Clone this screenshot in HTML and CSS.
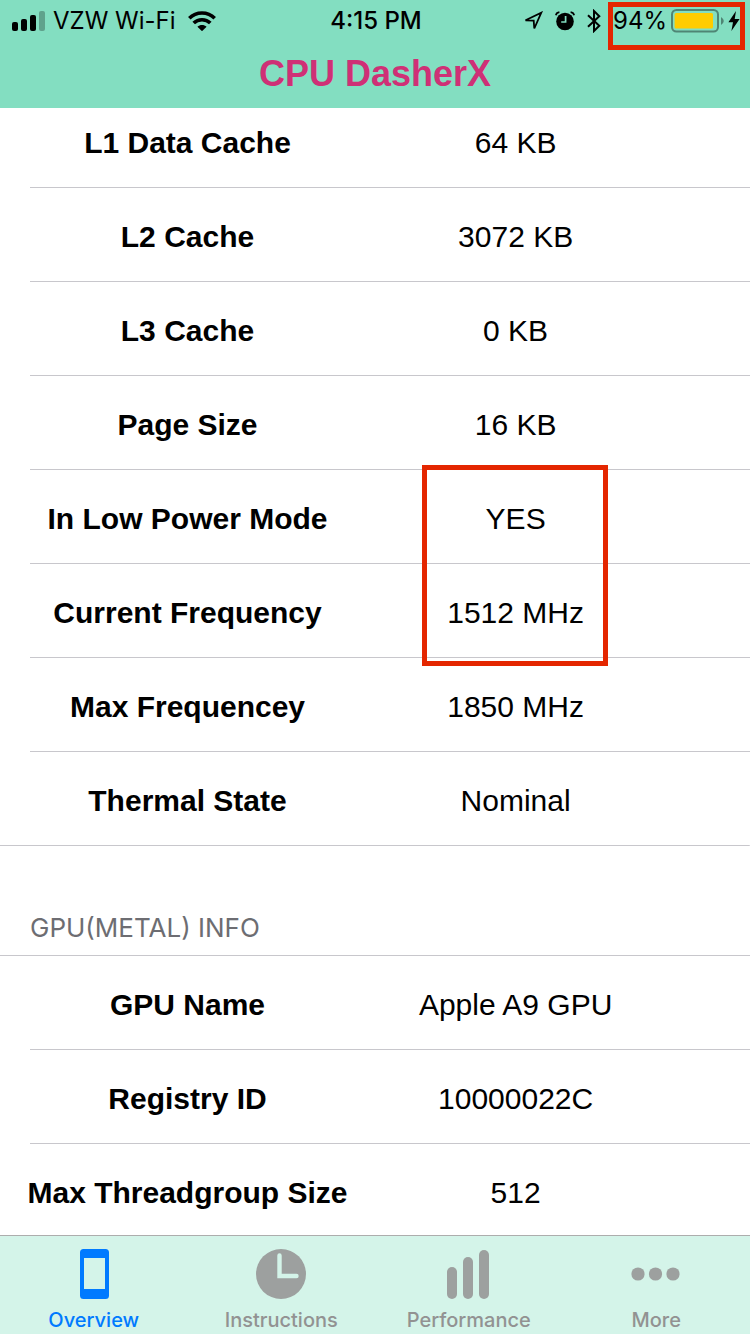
FILE: index.html
```html
<!DOCTYPE html>
<html lang="en">
<head>
<meta charset="utf-8">
<meta name="viewport" content="width=device-width, initial-scale=1">
<title>CPU DasherX</title>
<link rel="stylesheet" href="styles.css">
</head>
<body class="app">
<header class="header">
  <div class="status">
    <div class="status-left">
      <svg class="signal" width="34" height="20" viewBox="0 0 34 20" aria-hidden="true">
        <rect x="0" y="11" width="6" height="9" rx="2"/>
        <rect x="9" y="8" width="6" height="12" rx="2"/>
        <rect x="18" y="4" width="6" height="16" rx="2"/>
        <rect x="27" y="0" width="6" height="20" rx="2" opacity=".27"/>
      </svg>
      <span class="carrier">VZW Wi-Fi</span>
      <svg width="28" height="20" viewBox="0 0 28 20" aria-hidden="true">
        <g fill="none" stroke="#000" stroke-width="3.6">
          <path d="M1.3 7.2C8.3 .2 19.7 .2 26.7 7.2"/>
          <path d="M5.7 12.1C10.2 7.6 17.8 7.6 22.3 12.1"/>
        </g>
        <path d="M9.4 15.8C12 13.4 16 13.4 18.6 15.8L14 20.2Z"/>
      </svg>
    </div>
    <time class="clock">4:15 PM</time>
    <div class="status-right">
      <svg width="20" height="20" viewBox="0 0 20 20" aria-hidden="true">
        <path d="M2.500 9.300L18.300 1.700L11.300 17.500L10.700 9.600Z" fill="none" stroke="#000" stroke-width="1.800"/>
      </svg>
      <svg width="20" height="20" viewBox="0 0 20 20" aria-hidden="true">
        <circle cx="10" cy="10.500" r="8.800"/>
        <path d="M.8 4.200Q1.600 1.600 4.400 1.200M19.200 4.200Q18.400 1.600 15.600 1.200" fill="none" stroke="#000" stroke-width="1.700"/>
        <path d="M10.600 5V11H6.200" fill="none" stroke="#83dec1" stroke-width="1.700"/>
      </svg>
      <svg width="14" height="24" viewBox="0 0 14 24" aria-hidden="true">
        <path d="M1 6.300L12.300 16.800L7 22V2L12.300 7.200L1 17.700" fill="none" stroke="#000" stroke-width="2"/>
      </svg>
      <div class="power">
        <span>94%</span>
        <svg width="53" height="24" viewBox="0 0 53 24" aria-hidden="true">
          <rect x="1" y="1" width="46" height="21.5" rx="4.5" fill="none" stroke="#4f8574" stroke-width="2"/>
          <rect x="3.6" y="4" width="38.4" height="15.4" rx="1.5" fill="#fc0"/>
          <path d="M50 8Q55.6 12 50 16Z" fill="#4f8574"/>
        </svg>
        <svg width="12" height="22" viewBox="0 0 12 22" aria-hidden="true">
          <path d="M8 1L.4 12.2H5L3.4 21L11.6 9H6.7Z"/>
        </svg>
      </div>
    </div>
  </div>
  <h1 class="title">CPU DasherX</h1>
</header>

<main class="content">
  <table class="specs specs-scrolled" aria-label="CPU info">
    <colgroup><col class="col-name"><col class="col-value"><col></colgroup>
    <tbody>
      <tr><th scope="row">L1 Data Cache</th><td>64 KB</td><td></td></tr>
      <tr><th scope="row">L2 Cache</th><td>3072 KB</td><td></td></tr>
      <tr><th scope="row">L3 Cache</th><td>0 KB</td><td></td></tr>
      <tr><th scope="row">Page Size</th><td>16 KB</td><td></td></tr>
      <tr><th scope="row">In Low Power Mode</th><td class="marked">YES</td><td></td></tr>
      <tr><th scope="row">Current Frequency</th><td>1512 MHz</td><td></td></tr>
      <tr><th scope="row">Max Frequencey</th><td>1850 MHz</td><td></td></tr>
      <tr><th scope="row">Thermal State</th><td>Nominal</td><td></td></tr>
    </tbody>
  </table>
  <h2 class="section" id="gpu">GPU(METAL) INFO</h2>
  <table class="specs" aria-labelledby="gpu">
    <colgroup><col class="col-name"><col class="col-value"><col></colgroup>
    <tbody>
      <tr><th scope="row">GPU Name</th><td>Apple A9 GPU</td><td></td></tr>
      <tr><th scope="row">Registry ID</th><td>10000022C</td><td></td></tr>
      <tr><th scope="row">Max Threadgroup Size</th><td>512</td><td></td></tr>
    </tbody>
  </table>
</main>

<nav class="tabs">
  <button class="tab tab-active" type="button" aria-current="page">
    <svg width="50" height="50" viewBox="0 0 50 50" aria-hidden="true">
      <path fill-rule="evenodd" d="M14.500 0H36.500Q40 0 40 3.500V46.500Q40 50 36.500 50H14.500Q11 50 11 46.500V3.500Q11 0 14.500 0ZM15 9V40H36V9Z"/>
    </svg>
    <span>Overview</span>
  </button>
  <button class="tab" type="button">
    <svg width="50" height="50" viewBox="0 0 50 50" aria-hidden="true">
      <circle cx="25" cy="25" r="25"/>
      <path d="M23.500 6.500V27H40.500" fill="none" stroke="#d4f4e9" stroke-width="4.400" stroke-linecap="round"/>
    </svg>
    <span>Instructions</span>
  </button>
  <button class="tab" type="button">
    <svg width="50" height="50" viewBox="0 0 50 50" aria-hidden="true">
      <rect x="3" y="18" width="10" height="32" rx="5"/>
      <rect x="19" y="8" width="10" height="42" rx="5"/>
      <rect x="35" y="1" width="10" height="49" rx="5"/>
    </svg>
    <span>Performance</span>
  </button>
  <button class="tab" type="button">
    <svg width="50" height="50" viewBox="0 0 50 50" aria-hidden="true">
      <circle cx="7" cy="25" r="6.600"/>
      <circle cx="24.500" cy="25" r="6.600"/>
      <circle cx="42" cy="25" r="6.600"/>
    </svg>
    <span>More</span>
  </button>
</nav>
</body>
</html>
```
FILE: styles.css
```css
*,
*::after {
  box-sizing: border-box;
}

.app {
  margin: 0;
  height: 100vh;
  display: flex;
  flex-direction: column;
  background: #fff;
  color: #000;
  font-family: "Liberation Sans", Arial, sans-serif;
}

.header {
  flex: none;
  position: relative;
  z-index: 1;
  background: #83dec1;
}

.status {
  display: grid;
  grid-template-columns: 1fr auto 1fr;
  align-items: center;
  height: 40px;
  padding: 2px 10px 0 12px;
  font-family: Inter, sans-serif;
  font-size: 24px;
  line-height: 28px;
}

.status-left,
.status-right,
.power {
  display: flex;
  align-items: center;
}

.signal {
  margin-right: 7px;
}

.carrier {
  margin-right: 12px;
}

.clock {
  font-weight: 500;
}

.status-right {
  justify-content: flex-end;
  gap: 12px;
}

.power {
  position: relative;
  gap: 4px;
}

.power::after {
  content: "";
  position: absolute;
  top: -5px;
  left: -5px;
  right: -5px;
  height: 48px;
  border: 5px solid #e42600;
}

.title {
  margin: 0;
  padding: 14px 0;
  color: #cf3076;
  font-size: 36px;
  line-height: 40px;
  text-align: center;
}

.content {
  flex: 1;
  min-height: 0;
  overflow-y: auto;
  scrollbar-width: none;
}

.specs {
  width: 100%;
  table-layout: fixed;
  border-collapse: collapse;
  font-size: 30px;
  line-height: 36px;
}

.specs-scrolled {
  margin-top: -14px;
}

.col-name {
  width: 50%;
}

.col-value {
  width: 37.5%;
}

.specs tr {
  height: 94px;
  background: linear-gradient(#c8c7cc, #c8c7cc) 30px 100% / 100% 1px no-repeat;
}

.specs tr:last-child {
  background-position: 0 100%;
}

.specs th,
.specs td {
  padding: 4px 0 0;
  text-align: center;
  white-space: nowrap;
}

.marked {
  position: relative;
}

.marked::after {
  content: "";
  position: absolute;
  top: -5px;
  left: calc(50% - 94px);
  width: 186px;
  height: 201px;
  border: 5px solid #e42600;
}

.section {
  margin: 0;
  padding: 66px 30px 11px;
  border-bottom: 1px solid #c8c7cc;
  color: #6d6d72;
  font-family: Inter, sans-serif;
  font-size: 26px;
  font-weight: 400;
  line-height: 32px;
}

.tabs {
  flex: none;
  display: grid;
  grid-template-columns: repeat(4, 1fr);
  border-top: 1px solid #adadad;
  background: #d4f4e9;
}

.tab {
  display: flex;
  flex-direction: column;
  align-items: center;
  gap: 9px;
  padding: 13px 0 2px;
  border: 0;
  background: none;
  color: #929292;
  fill: #9da09f;
  font-family: Inter, sans-serif;
  font-size: 20px;
  font-weight: 500;
  line-height: 24px;
}

.tab-active {
  color: #007aff;
  fill: #007aff;
}
```
